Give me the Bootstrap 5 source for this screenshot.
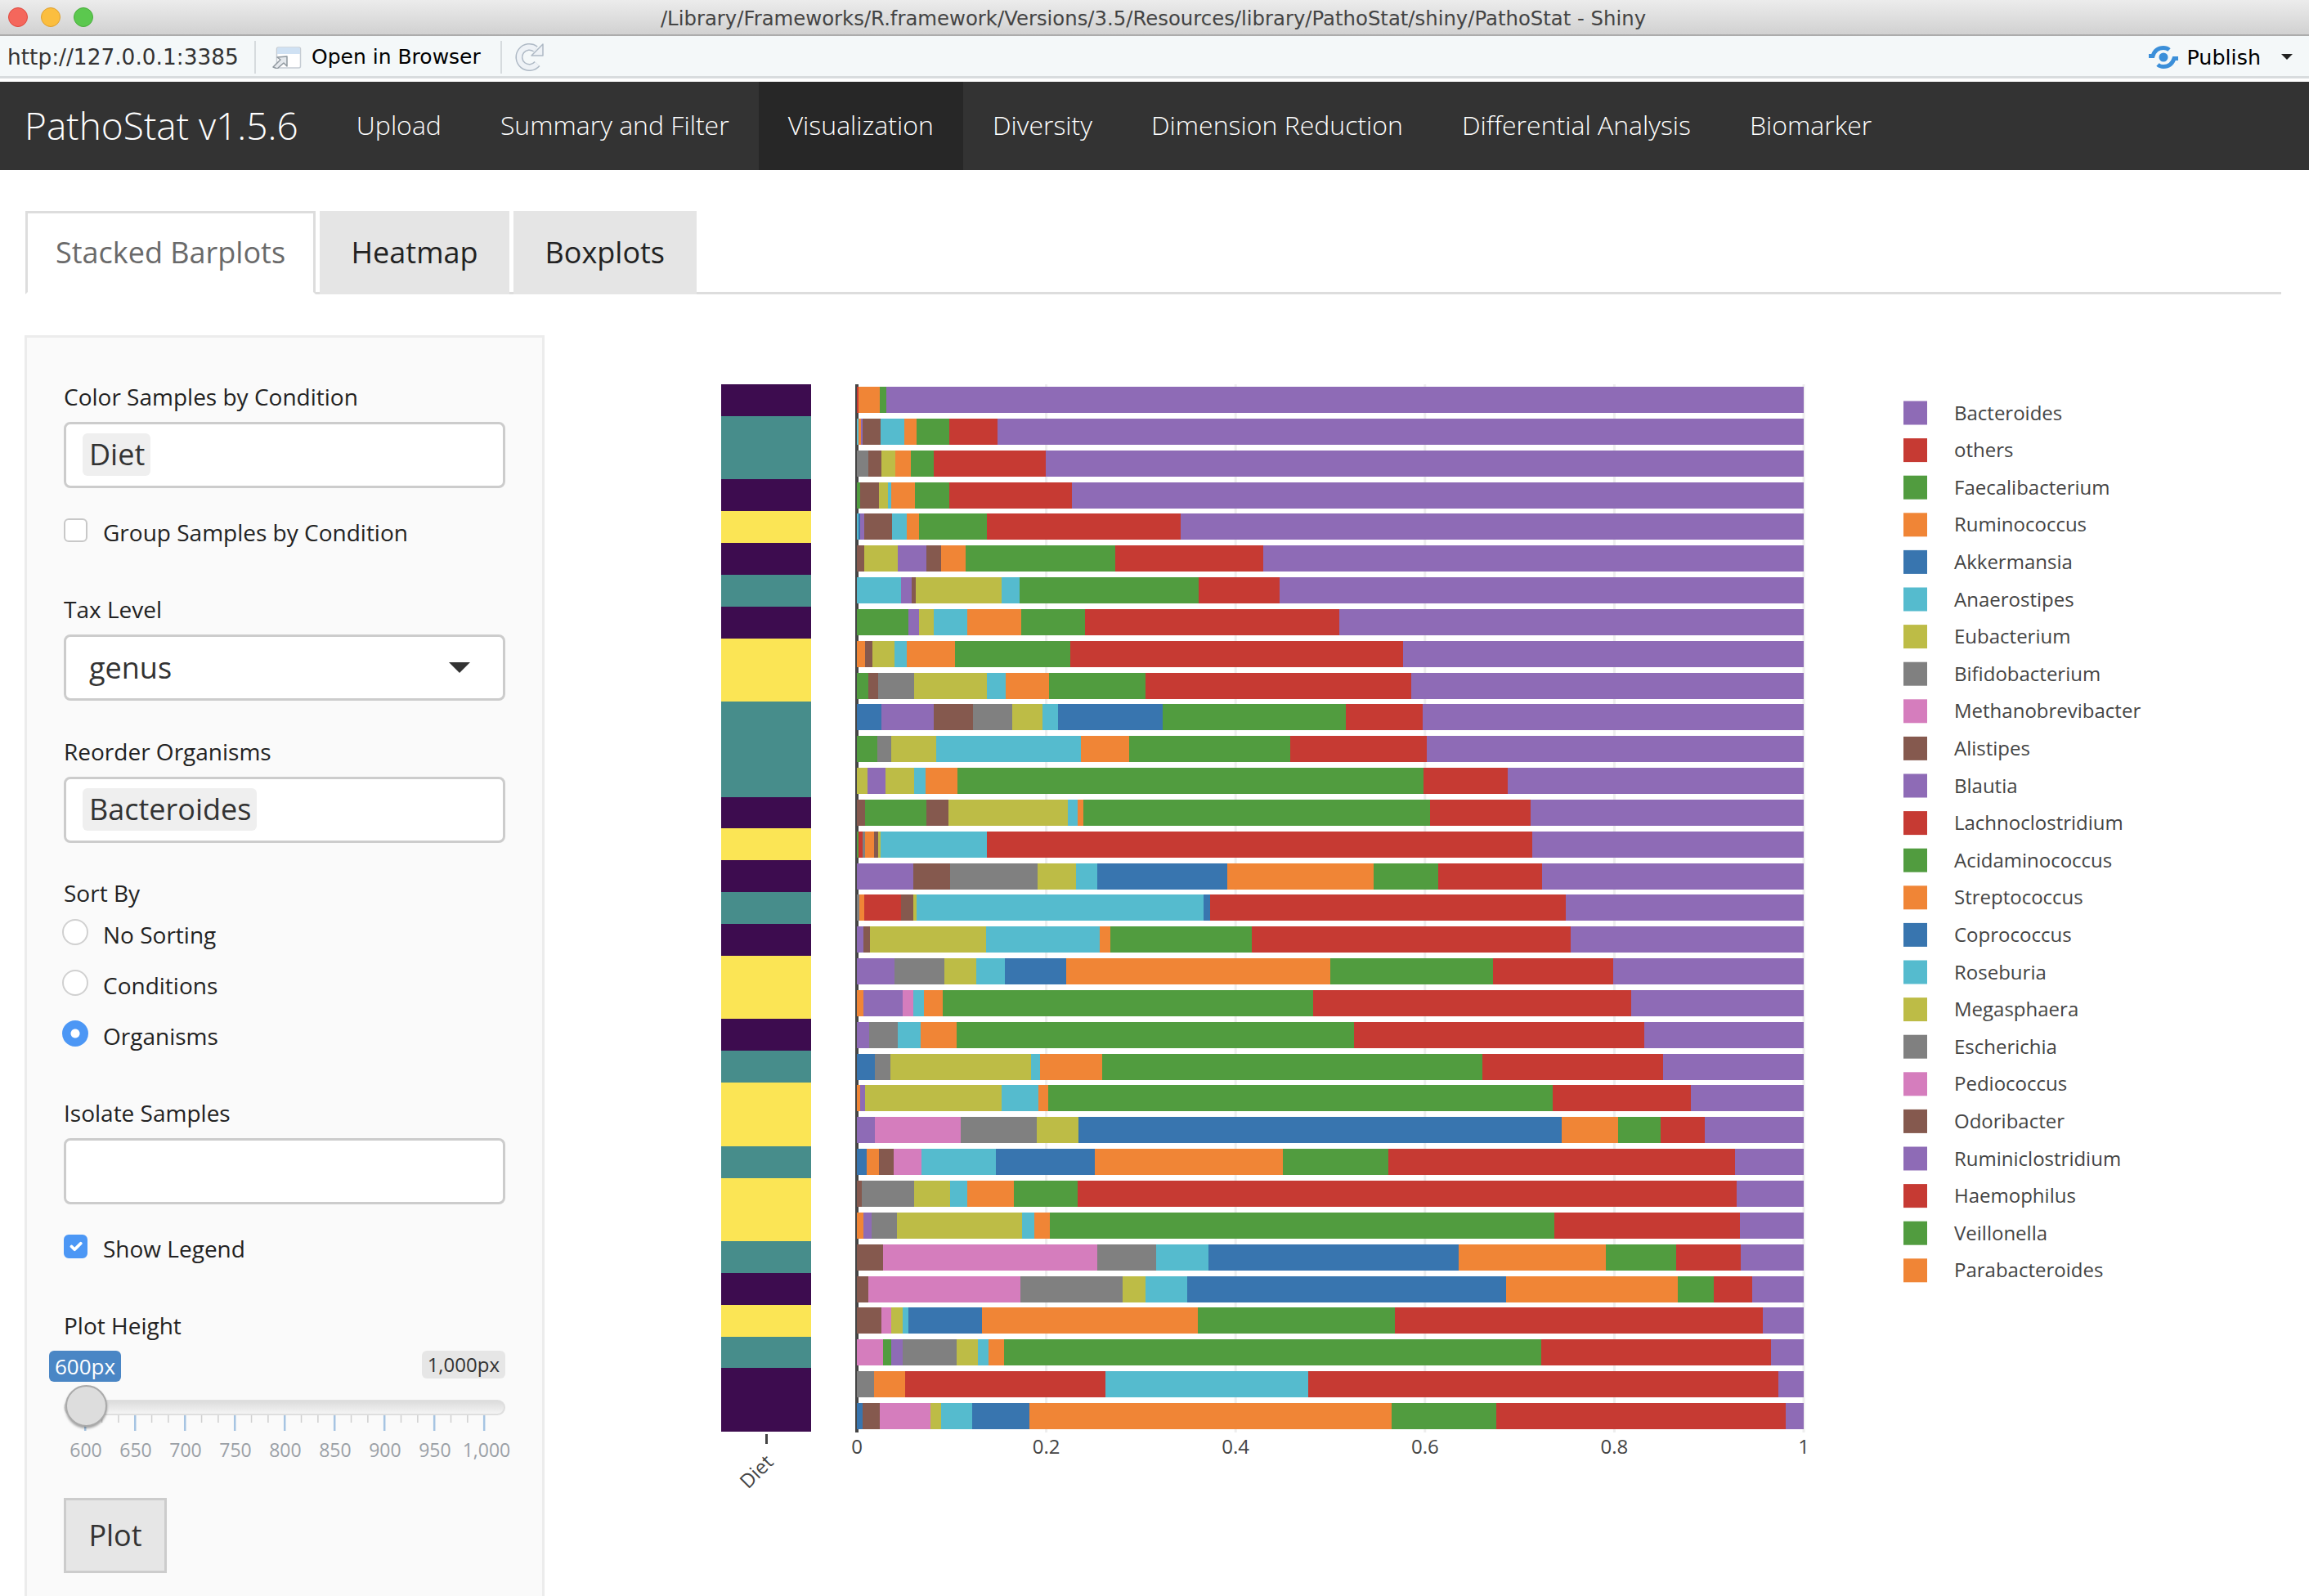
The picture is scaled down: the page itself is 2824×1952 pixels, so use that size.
<!DOCTYPE html>
<html lang="en">
<head>
<meta charset="UTF-8">
<title>PathoStat - Shiny</title>
<link rel="stylesheet" href="https://cdn.jsdelivr.net/npm/bootstrap@5.3.0/dist/css/bootstrap.min.css">
<style>
    html, body { height: 1952px; overflow: hidden; }
    body { font-family: "Open Sans", sans-serif; color: #222; background: #fff; }

    /* mac window chrome */
    .win-title { height: 44px; display: grid; grid-template-columns: 1fr auto 1fr; align-items: center; background: linear-gradient(#ececec, #d1d1d1); border-bottom: 2px solid #acacac; }
    .win-dots { padding-left: 10px; gap: 16px; }
    .win-dot { width: 24px; height: 24px; border-radius: 50%; }
    .dot-red { background: #f4675c; border: 1px solid #e0483e; }
    .dot-amber { background: #fbbe3f; border: 1px solid #dea030; }
    .dot-green { background: #5bc84e; border: 1px solid #49ad3c; }
    .win-name { font-family: "DejaVu Sans", sans-serif; font-size: 24.35px; color: #444; white-space: nowrap; padding-top: 4px; margin-left: -3px; }
    .win-tools { height: 52px; background: #f4f8f9; border-bottom: 3px solid #d8dcde; padding: 3px 0 0 9px; font-family: "DejaVu Sans", sans-serif; color: #000; }
    .tool-url { font-size: 26.4px; color: #333; width: 302px; white-space: nowrap; }
    .tool-sep { width: 2px; height: 40px; background: #d6dbde; }
    .tool-open { font-size: 25px; width: 299px; padding-left: 19px; gap: 12px; white-space: nowrap; }
    .tool-publish { font-size: 25.4px; gap: 9px; margin-right: 20px; }
    .tool-publish svg { margin-left: -4px; }
    .tool-caret { width: 0; height: 0; margin-left: 16px; border-left: 7px solid transparent; border-right: 7px solid transparent; border-top: 7px solid #222; }
    .tool-gap { height: 4px; background: #fff; }

    /* navbar */
    .app-nav { height: 108px; background: #333; padding: 0; align-items: stretch; }
    .app-nav .navbar-brand { font-size: 46px; font-weight: 300; color: #fff; padding: 0 35px 2px 30px; margin: 0; line-height: 106px; }
    .app-nav.navbar-expand .navbar-nav .nav-link { font-size: 32px; font-weight: 300; color: #fff; line-height: 106px; padding: 0 36px 2px; }
    .app-nav.navbar-expand .navbar-nav .nav-link.active { background: #272727; color: #fff; }

    /* tabs */
    .app-tabs { margin: 50px 34px 50px 31px; border-bottom: 3px solid #ddd; gap: 5px; }
    .app-tabs .nav-link { height: 102px; font-size: 36px; line-height: 102px; padding: 0 38.5px; border: 0; border-radius: 0; background: #e5e5e5; color: #222; margin-bottom: -3px; }
    .app-tabs .nav-link.active { background: #fff; color: #6a6a6a; padding: 0 34px; line-height: 96px; border: 3px solid #ddd; border-bottom: 3px solid #fff; }

    /* sidebar */
    .side-well { width: 636px; height: 1600px; margin-left: 30px; flex: none; background: #fafafa; border: 3px solid #ececec; padding: 52px 46px 0 45px; }
    .side-label { font-size: 28px; line-height: 40px; color: #222; display: block; }
    .side-box { height: 81px; width: 540px; margin-top: 11px; background: #fff; border: 3px solid #ccc; border-radius: 8px; padding: 11px 20px; }
    .side-chip { display: inline-block; height: 52px; line-height: 52px; padding: 0 7px 0 8px; font-size: 36px; color: #333; background: #efefef; border-radius: 6px; }
    .side-select { padding: 11px 28px; font-size: 36px; line-height: 52px; color: #333; }
    .side-arrow { width: 0; height: 0; border-left: 13px solid transparent; border-right: 13px solid transparent; border-top: 13px solid #333; margin-right: 12px; }
    .side-check { height: 40px; line-height: 40px; font-size: 28px; gap: 19px; }
    .side-check .form-check-input { width: 29px; height: 29px; margin: -6px 0 0 0; flex: none; border: 2px solid #c8c8c8; border-radius: 6px; }
    .side-check .form-check-input:checked { background-color: #4c97f5; border-color: #4c97f5; }
    .side-radio { height: 62px; font-size: 28px; gap: 18px; margin-left: -2px; }
    .side-radio .form-check-input { width: 32px; height: 32px; margin: -6px 0 0 0; flex: none; border: 2px solid #d0d0d0; border-radius: 50%; }
    .side-radio .form-check-input:checked { background-color: #4c97f5; border-color: #4c97f5; background-image: radial-gradient(circle, #fff 0 5px, transparent 6px); }
    .mt-34 { margin-top: 34px; }
    .mt-54 { margin-top: 54px; }
    .mt-42 { margin-top: 42px; }
    .mt-41 { margin-top: 41px; }
    .mt-43 { margin-top: 43px; }

    /* slider */
    .range-tags { margin-top: 11px; height: 38px; width: 540px; }
    .range-from { margin-left: -18px; height: 38px; line-height: 38px; padding: 0 7px; font-size: 26px; color: #fff; background: #4a86c5; border-radius: 6px; }
    .range-to { height: 34px; line-height: 34px; padding: 0 7px; font-size: 24px; color: #333; background: #e6e6e6; border-radius: 6px; }
    .range-track { height: 19px; width: 540px; margin-top: 22px; background: linear-gradient(#dcdcdc, #f4f4f4); border: 2px solid #dedede; border-radius: 10px; }
    .range-knob { position: absolute; left: 0; top: -20px; width: 51px; height: 51px; border-radius: 50%; background: #ddd; border: 2px solid #aaa; box-shadow: 0 2px 3px rgba(0,0,0,.35); }
    .range-scale { display: block; width: 560px; height: 59px; }
    .range-scale text { font-size: 23px; fill: #9aa0a6; text-anchor: middle; }
    .btn.plot-btn { margin-top: 42px; width: 126px; height: 92px; padding: 0; font-size: 36px; color: #333; background: #e6e6e6; border: 3px solid #ccc; border-radius: 0; }

    /* chart */
    .plot-svg { display: block; flex: none; }
    .plot-svg text { font-family: "Open Sans", sans-serif; font-size: 24px; fill: #444; }
</style>
</head>
<body>

<div class="win-title">
    <div class="win-dots d-flex">
        <span class="win-dot dot-red"></span>
        <span class="win-dot dot-amber"></span>
        <span class="win-dot dot-green"></span>
    </div>
    <div class="win-name">/Library/Frameworks/R.framework/Versions/3.5/Resources/library/PathoStat/shiny/PathoStat - Shiny</div>
    <div></div>
</div>
<div class="win-tools d-flex align-items-center">
    <span class="tool-url">http://127.0.0.1:3385</span>
    <span class="tool-sep"></span>
    <span class="tool-open d-flex align-items-center">
        <svg width="37" height="27" viewBox="0 0 37 27">
            <rect x="6.5" y="1" width="29" height="25" rx="2" fill="#fff" stroke="#c5ccd3" stroke-width="1.5"/>
            <path d="M7 3a2 2 0 0 1 2-2h24a2 2 0 0 1 2 2v6H7z" fill="#cfe1f3"/>
            <path d="M2 25 11 16 7 13 19 12 19 24 15 20 7 27z" fill="#e4e8ec" stroke="#8f989f" stroke-width="1.5" stroke-linejoin="round"/>
        </svg>
        Open in Browser
    </span>
    <span class="tool-sep"></span>
    <svg class="ms-3" width="36" height="36" viewBox="0 0 36 36">
        <path d="M27 26A12.5 12.5 0 1 1 25 8" fill="none" stroke="#aeb9c5" stroke-width="9"/>
        <path d="M27 26A12.5 12.5 0 1 1 25 8" fill="none" stroke="#eef2f6" stroke-width="6"/>
        <path d="M34 2V16H20z" fill="#eef2f6" stroke="#aeb9c5" stroke-width="1.5" stroke-linejoin="round"/>
    </svg>
    <span class="tool-publish d-flex align-items-center ms-auto">
        <svg width="38" height="30" viewBox="0 0 38 30">
            <path d="M1 13.5H6C8 7 12 3.500 19 3.500c3 0 5 .7 7 2.500" fill="none" stroke="#3b8fd9" stroke-width="5"/>
            <path d="M37 16.500H32C30 23 26 26.500 19 26.500c-3 0-5-.7-7-2.500" fill="none" stroke="#3b8fd9" stroke-width="5"/>
            <circle cx="19" cy="15" r="5.500" fill="#3b8fd9"/>
        </svg>
        Publish
        <span class="tool-caret"></span>
    </span>
</div>
<div class="tool-gap"></div>

<nav class="navbar navbar-expand app-nav">
    <a class="navbar-brand" href="#">PathoStat v1.5.6</a>
    <ul class="navbar-nav">
        <li class="nav-item"><a class="nav-link" href="#">Upload</a></li>
        <li class="nav-item"><a class="nav-link" href="#">Summary and Filter</a></li>
        <li class="nav-item"><a class="nav-link active" href="#">Visualization</a></li>
        <li class="nav-item"><a class="nav-link" href="#">Diversity</a></li>
        <li class="nav-item"><a class="nav-link" href="#">Dimension Reduction</a></li>
        <li class="nav-item"><a class="nav-link" href="#">Differential Analysis</a></li>
        <li class="nav-item"><a class="nav-link" href="#">Biomarker</a></li>
    </ul>
</nav>

<ul class="nav nav-tabs app-tabs">
    <li class="nav-item"><a class="nav-link active" href="#">Stacked Barplots</a></li>
    <li class="nav-item"><a class="nav-link" href="#">Heatmap</a></li>
    <li class="nav-item"><a class="nav-link" href="#">Boxplots</a></li>
</ul>

<div class="d-flex">
    <div class="side-well">
        <label class="side-label">Color Samples by Condition</label>
        <div class="side-box"><span class="side-chip">Diet</span></div>
        <div class="side-check d-flex align-items-center mt-34">
            <input class="form-check-input" type="checkbox">
            <span>Group Samples by Condition</span>
        </div>

        <label class="side-label mt-54">Tax Level</label>
        <div class="side-box side-select d-flex justify-content-between align-items-center">
            <span>genus</span>
            <span class="side-arrow"></span>
        </div>

        <label class="side-label mt-42">Reorder Organisms</label>
        <div class="side-box"><span class="side-chip">Bacteroides</span></div>

        <label class="side-label mt-41">Sort By</label>
        <div class="side-radio d-flex align-items-center">
            <input class="form-check-input" type="radio" name="sortBy">
            <span>No Sorting</span>
        </div>
        <div class="side-radio d-flex align-items-center">
            <input class="form-check-input" type="radio" name="sortBy">
            <span>Conditions</span>
        </div>
        <div class="side-radio d-flex align-items-center">
            <input class="form-check-input" type="radio" name="sortBy" checked>
            <span>Organisms</span>
        </div>

        <label class="side-label mt-43">Isolate Samples</label>
        <div class="side-box"></div>
        <div class="side-check d-flex align-items-center mt-34">
            <input class="form-check-input" type="checkbox" checked>
            <span>Show Legend</span>
        </div>

        <label class="side-label mt-54">Plot Height</label>
        <div class="range-tags d-flex justify-content-between align-items-start">
            <span class="range-from">600px</span>
            <span class="range-to">1,000px</span>
        </div>
        <div class="range-track position-relative">
            <span class="range-knob"></span>
        </div>
        <svg id="rangeScale" class="range-scale" viewBox="78 0 560 59"></svg>
        <button class="btn plot-btn" type="button">Plot</button>
    </div>

    <svg id="plot" class="plot-svg" width="2158" height="1542" viewBox="666 410 2158 1542"></svg>
</div>

<script>
    const SVG_NS = "http://www.w3.org/2000/svg";

    function add(parent, tag, attrs, text) {
        const el = document.createElementNS(SVG_NS, tag);
        for (const k in attrs) el.setAttribute(k, attrs[k]);
        if (text !== undefined) el.textContent = text;
        parent.appendChild(el);
        return el;
    }

    const colors = {
        p: "#8e6bb6", r: "#c63a33", g: "#519c3f", o: "#f08536", b: "#3875af",
        c: "#55bbce", y: "#bdbc46", k: "#808080", m: "#d57dbd", n: "#85594e"
    };

    // each token: colour + where the segment ends, 409..2931 maps onto 0..1
    const rows = [
        "r414 o470 g488 p",
        "c414 o419 p425 n473 c535 o568 g656 r784 p",
        "k440 n475 y512 o553 g614 r912 p",
        "g418 n468 y492 c500 o564 g656 r982 p",
        "c413 b418 p429 n503 c541 o575 g756 r1272 p",
        "n429 y518 p595 n634 o699 g1098 r1492 p",
        "c527 p555 n566 y795 c843 g1320 r1535 p",
        "g547 p575 y614 c703 o847 g1017 r1694 p",
        "o431 n451 y510 c541 o671 g978 r1864 p",
        "g440 n466 k562 y756 c805 o921 g1178 r1886 p",
        "b475 p614 n719 k823 y904 c945 b1224 g1711 r1916 p",
        "g464 k501 y621 c1005 o1135 g1563 r1927 p",
        "y438 p486 y562 c592 o677 g1918 r2142 p",
        "n431 g595 n653 y971 c996 o1013 g1936 r2203 p",
        "g414 r425 k431 o455 n466 y473 c756 r2208 p",
        "p560 n658 k891 y993 c1050 b1396 o1785 g1957 r2234 p",
        "k415 o429 r527 n560 y568 c1333 b1349 r2297 p",
        "p427 n444 y754 c1055 o1085 g1461 r2310 p",
        "p510 k642 y727 c804 b967 o1670 g2103 r2423 p",
        "o427 p531 m560 c588 o638 g1624 r2471 p",
        "p441 k518 c578 o675 g1733 r2506 p",
        "b457 k499 y873 c896 o1063 g2075 r2556 p",
        "o418 p431 y795 c893 o919 g2262 r2630 p",
        "p457 m686 k889 y1000 b2286 o2436 g2550 r2667 p",
        "b436 o468 n507 m581 c780 b1043 o1544 g1825 r2748 p",
        "n422 k562 y658 c702 o828 g997 r2752 p",
        "o427 p449 k516 y849 c882 o923 g2267 r2761 p",
        "n479 m1050 k1206 c1346 b2012 o2404 g2591 r2763 p",
        "n440 m845 k1117 y1178 c1289 b2138 o2595 g2691 r2794 p",
        "n475 m501 y531 c547 b743 o1318 g1842 r2822 p",
        "m479 g501 p531 k675 y732 c759 o801 g2232 r2844 p",
        "k455 o538 r1071 c1611 r2863 p",
        "b425 n470 m605 y633 c716 b869 o1833 g2112 r2883 p"
    ];

    // Diet annotation, one letter per sample: d dark, t teal, l yellow
    const diet = "dttdldtdllttt" + "dldtdlldtllt" + "lltdltdd";
    const dietColors = { d: "#3d0c4f", t: "#478d8b", l: "#fbe555" };

    const legend = ["Bacteroides", "others", "Faecalibacterium", "Ruminococcus", "Akkermansia", "Anaerostipes",
        "Eubacterium", "Bifidobacterium", "Methanobrevibacter", "Alistipes", "Blautia", "Lachnoclostridium",
        "Acidaminococcus", "Streptococcus", "Coprococcus", "Roseburia", "Megasphaera", "Escherichia",
        "Pediococcus", "Odoribacter", "Ruminiclostridium", "Haemophilus", "Veillonella", "Parabacteroides"];
    const legendOrder = "prgobcykmn";

    const plot = document.getElementById("plot");
    const X0 = 1048, W = 1158;

    // grid and axis go under the bars
    [0.2, 0.4, 0.6, 0.8, 1].forEach(t => {
        add(plot, "rect", { x: X0 + t * W - 1.5, y: 470, width: 3, height: 1282, fill: "#eeeeee" });
    });
    add(plot, "rect", { x: 1046, y: 470, width: 4, height: 1282, fill: "#444" });

    [0, 0.2, 0.4, 0.6, 0.8, 1].forEach(t => {
        add(plot, "text", { x: X0 + t * W, y: 1778, "text-anchor": "middle" }, String(t));
    });

    rows.forEach((row, i) => {
        const y = Math.round(473 + i * 38.84);
        let start = 0;
        row.split(" ").forEach(tok => {
            const end = tok.length > 1 ? (Number(tok.slice(1)) - 409) / 2522 : 1;
            add(plot, "rect", {
                x: X0 + start * W, y: y, width: (end - start) * W, height: 32,
                fill: colors[tok[0]], "shape-rendering": "crispEdges"
            });
            start = end;
        });
    });

    diet.split("").forEach((d, i) => {
        const top = Math.round(470 + i * 38.82), bottom = Math.round(470 + (i + 1) * 38.82);
        add(plot, "rect", { x: 882, y: top, width: 110, height: bottom - top, fill: dietColors[d] });
    });
    add(plot, "rect", { x: 936, y: 1754, width: 3, height: 12, fill: "#444" });
    add(plot, "text", { transform: "translate(915 1822) rotate(-45)" }, "Diet");

    legend.forEach((name, i) => {
        const cy = 505 + i * 45.6;
        add(plot, "rect", { x: 2328, y: cy - 14.5, width: 29, height: 29, fill: colors[legendOrder[i % 10]] });
        add(plot, "text", { x: 2390, y: cy + 8.5 }, name);
    });

    // slider scale
    const scale = document.getElementById("rangeScale");
    const labels = ["600", "650", "700", "750", "800", "850", "900", "950", "1,000"];
    for (let i = 0; i <= 24; i++) {
        const x = 104 + i * 20.33;
        if (i % 3 === 0) {
            add(scale, "rect", { x: x - 1, y: 0, width: 2.5, height: 19, fill: "#a6c4e2" });
            add(scale, "text", { x: i === 24 ? x + 3 : x + 1, y: 51 }, labels[i / 3]);
        } else {
            add(scale, "rect", { x: x - 0.5, y: 0, width: 1.5, height: 9, fill: "#cfcfcf" });
        }
    }
</script>
</body>
</html>
